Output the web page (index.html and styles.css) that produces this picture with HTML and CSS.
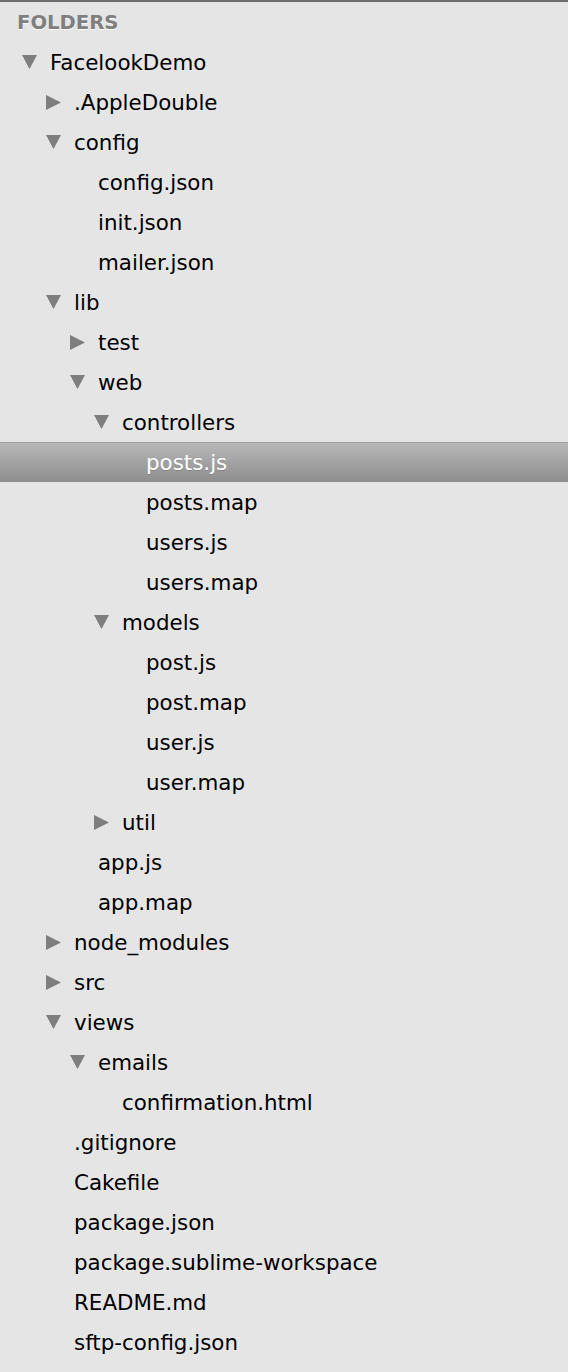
FILE: index.html
```html
<!DOCTYPE html>
<html>

<head>
  <meta charset="utf-8">
  <link rel="stylesheet" href="styles.css">
</head>

<body>
<div class="sidebar">
  <div class="sidebar-header">FOLDERS</div>

  <div class="tree">
    <div class="row lvl0"><span class="twisty"><svg class="down" viewBox="0 0 14 13"><polygon points="0,0 14,0 7,13"/></svg></span><span class="name">FacelookDemo</span></div>
    <div class="row lvl1"><span class="twisty"><svg class="right" viewBox="0 0 14 14"><polygon points="0,0 14,7 0,14"/></svg></span><span class="name">.AppleDouble</span></div>
    <div class="row lvl1"><span class="twisty"><svg class="down" viewBox="0 0 14 13"><polygon points="0,0 14,0 7,13"/></svg></span><span class="name">config</span></div>
    <div class="row lvl2"><span class="twisty"></span><span class="name">config.json</span></div>
    <div class="row lvl2"><span class="twisty"></span><span class="name">init.json</span></div>
    <div class="row lvl2"><span class="twisty"></span><span class="name">mailer.json</span></div>
    <div class="row lvl1"><span class="twisty"><svg class="down" viewBox="0 0 14 13"><polygon points="0,0 14,0 7,13"/></svg></span><span class="name">lib</span></div>
    <div class="row lvl2"><span class="twisty"><svg class="right" viewBox="0 0 14 14"><polygon points="0,0 14,7 0,14"/></svg></span><span class="name">test</span></div>
    <div class="row lvl2"><span class="twisty"><svg class="down" viewBox="0 0 14 13"><polygon points="0,0 14,0 7,13"/></svg></span><span class="name">web</span></div>
    <div class="row lvl3"><span class="twisty"><svg class="down" viewBox="0 0 14 13"><polygon points="0,0 14,0 7,13"/></svg></span><span class="name">controllers</span></div>
    <div class="row lvl4 selected"><span class="twisty"></span><span class="name">posts.js</span></div>
    <div class="row lvl4"><span class="twisty"></span><span class="name">posts.map</span></div>
    <div class="row lvl4"><span class="twisty"></span><span class="name">users.js</span></div>
    <div class="row lvl4"><span class="twisty"></span><span class="name">users.map</span></div>
    <div class="row lvl3"><span class="twisty"><svg class="down" viewBox="0 0 14 13"><polygon points="0,0 14,0 7,13"/></svg></span><span class="name">models</span></div>
    <div class="row lvl4"><span class="twisty"></span><span class="name">post.js</span></div>
    <div class="row lvl4"><span class="twisty"></span><span class="name">post.map</span></div>
    <div class="row lvl4"><span class="twisty"></span><span class="name">user.js</span></div>
    <div class="row lvl4"><span class="twisty"></span><span class="name">user.map</span></div>
    <div class="row lvl3"><span class="twisty"><svg class="right" viewBox="0 0 14 14"><polygon points="0,0 14,7 0,14"/></svg></span><span class="name">util</span></div>
    <div class="row lvl2"><span class="twisty"></span><span class="name">app.js</span></div>
    <div class="row lvl2"><span class="twisty"></span><span class="name">app.map</span></div>
    <div class="row lvl1"><span class="twisty"><svg class="right" viewBox="0 0 14 14"><polygon points="0,0 14,7 0,14"/></svg></span><span class="name">node_modules</span></div>
    <div class="row lvl1"><span class="twisty"><svg class="right" viewBox="0 0 14 14"><polygon points="0,0 14,7 0,14"/></svg></span><span class="name">src</span></div>
    <div class="row lvl1"><span class="twisty"><svg class="down" viewBox="0 0 14 13"><polygon points="0,0 14,0 7,13"/></svg></span><span class="name">views</span></div>
    <div class="row lvl2"><span class="twisty"><svg class="down" viewBox="0 0 14 13"><polygon points="0,0 14,0 7,13"/></svg></span><span class="name">emails</span></div>
    <div class="row lvl3"><span class="twisty"></span><span class="name">confirmation.html</span></div>
    <div class="row lvl1"><span class="twisty"></span><span class="name">.gitignore</span></div>
    <div class="row lvl1"><span class="twisty"></span><span class="name">Cakefile</span></div>
    <div class="row lvl1"><span class="twisty"></span><span class="name">package.json</span></div>
    <div class="row lvl1"><span class="twisty"></span><span class="name">package.sublime-workspace</span></div>
    <div class="row lvl1"><span class="twisty"></span><span class="name">README.md</span></div>
    <div class="row lvl1"><span class="twisty"></span><span class="name">sftp-config.json</span></div>
  </div>
</div>
</body>

</html>
```

FILE: styles.css
```css
* {
  box-sizing: border-box;
}

body {
  margin: 0;
  padding: 0;
  background-color: #e5e5e5;
  font-family: "DejaVu Sans", "Liberation Sans", sans-serif;
  color: #000;
}

.sidebar {
  border-top: 2px solid #6e6e6e;
  min-height: 100vh;
}

.sidebar-header {
  height: 40px;
  line-height: 38px;
  padding-top: 2px;
  padding-left: 17px;
  font-size: 19.6px;
  font-weight: bold;
  color: #7f7f7f;
  text-shadow: 0 1px 0 #fafafa;
}

.row {
  display: flex;
  align-items: center;
  height: 40px;
  font-size: 21.4px;
  white-space: nowrap;
}

.lvl0 { padding-left: 22px; }
.lvl1 { padding-left: 46px; }
.lvl2 { padding-left: 70px; }
.lvl3 { padding-left: 94px; }
.lvl4 { padding-left: 118px; }

.twisty {
  width: 28px;
  flex-shrink: 0;
  display: flex;
  align-items: center;
}

.twisty svg {
  fill: #7e7e7e;
}

.twisty .down {
  width: 15px;
  height: 14px;
}

.twisty .right {
  width: 15px;
  height: 15px;
}

.name {
  line-height: 40px;
  padding-top: 1px;
}

.selected {
  border-top: 1px solid #9c9c9c;
  background: linear-gradient(#b8b8b8, #8d8d8d);
  color: #fff;
}

.selected .name {
  line-height: 39px;
  padding-top: 0;
  text-shadow: 0 1px 0 rgba(0, 0, 0, 0.15);
}
```
